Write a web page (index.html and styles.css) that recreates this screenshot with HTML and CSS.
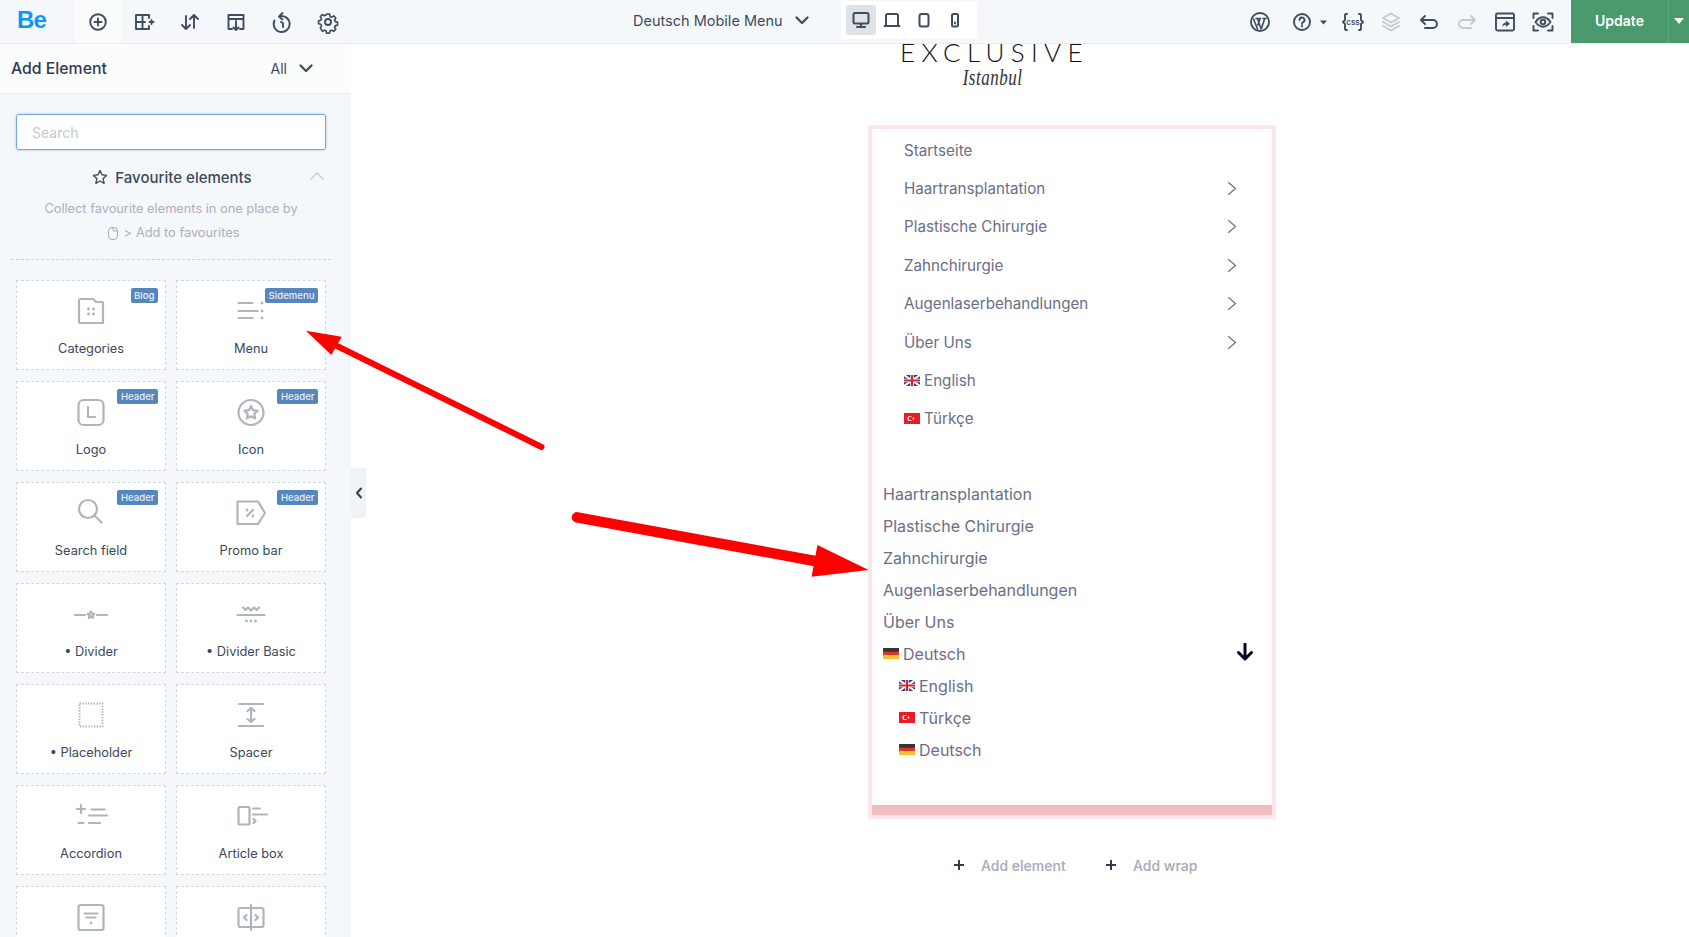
FILE: index.html
```html
<!DOCTYPE html>
<html lang="en">
<head>
  <meta charset="UTF-8" />
  <title>Deutsch Mobile Menu</title>
  <link rel="stylesheet" href="styles.css">
</head>
<body>
  <div class="topbar">
    <div class="brand">Be</div>
    <div class="tab active">
      <svg width="24" height="24" viewBox="0 0 24 24"><circle cx="12" cy="12" r="7.800"/><path d="M12 8.500v7M8.500 12h7"/></svg>
    </div>
    <div class="tab">
      <svg width="24" height="24" viewBox="0 0 24 24"><path d="M17 8V5H4v14h13v-3M10.500 5v14M4 12h9M19.500 10v4M17.500 12h4"/></svg>
    </div>
    <div class="tab">
      <svg width="24" height="24" viewBox="0 0 24 24"><path d="M8 6v13M4 15l4 4 4-4M16 18V5M12 9l4-4 4 4"/></svg>
    </div>
    <div class="tab">
      <svg width="24" height="24" viewBox="0 0 24 24"><path d="M8 19H4.500V5h15v14H16M4.500 9h15M12 11v9M9.500 17.500l2.500 2.500 2.500-2.500"/></svg>
    </div>
    <div class="tab">
      <svg width="24" height="24" viewBox="0 0 24 24"><path d="M9 6.500a8 8 0 1 1-4.500 4M12.500 3L9 6.500l3.500 3M11 12l2 1v4"/></svg>
    </div>
    <div class="tab">
      <svg width="24" height="24" viewBox="0 0 24 24"><circle cx="12" cy="12" r="3"/><path d="M10.300 3h3.400l.6 2.600 1.800.8 2.300-1.400 2.400 2.400-1.400 2.300.8 1.800 2.600.6v3.400l-2.600.6-.8 1.800 1.400 2.300-2.400 2.400-2.300-1.400-1.800.8-.6 2.600h-3.400l-.6-2.600-1.800-.8-2.300 1.400L3.200 18.600l1.400-2.300-.8-1.800L1.200 13.900v-3.400l2.600-.6.800-1.800L3.200 5.800 5.600 3.400l2.300 1.400 1.800-.8z" transform="translate(1.500 1.500) scale(.88)"/></svg>
    </div>
    <div class="page-title">
      <span>Deutsch Mobile Menu</span>
      <svg width="14" height="9" viewBox="0 0 14 9"><path d="M1.500 1.500L7 7l5.500-5.500"/></svg>
    </div>
    <div class="devices">
      <div class="device on">
        <svg width="20" height="20" viewBox="0 0 20 20"><rect x="2.500" y="3" width="15" height="10.500" rx="1.500"/><path d="M10 14v3M6 17h8" /></svg>
      </div>
      <div class="device">
        <svg width="20" height="20" viewBox="0 0 20 20"><path d="M4 15V5.500A1.500 1.500 0 0 1 5.500 4h9A1.500 1.500 0 0 1 16 5.500V15M2.500 16h15"/></svg>
      </div>
      <div class="device">
        <svg width="20" height="20" viewBox="0 0 20 20"><rect x="5.500" y="4" width="9" height="12.500" rx="2"/></svg>
      </div>
      <div class="device">
        <svg width="20" height="20" viewBox="0 0 20 20"><rect x="7" y="4" width="6" height="12.500" rx="1.500"/><path d="M10 12.500v1"/></svg>
      </div>
    </div>
    <div class="tools">
      <div class="tool">
        <svg width="22" height="22" viewBox="0 0 22 22"><circle cx="11" cy="11" r="9"/><path class="thick" d="M4.500 8l4 10M7 7.500h4.500M8.500 8l3.700 10L15.600 8M11 8l-2.200 6M14 7.500h3M15.600 8l-2 6" /></svg>
      </div>
      <div class="tool help">
        <svg width="55" height="24" viewBox="0 0 55 24"><circle cx="23" cy="12" r="8"/><path d="M20.500 10a2.500 2.500 0 1 1 3.500 2.300c-.7.400-1 .8-1 1.700M23 16v.5"/><path class="solid" d="M41 10.500h7l-3.500 4z"/></svg>
      </div>
      <div class="tool">
        <svg width="24" height="24" viewBox="0 0 24 24"><path d="M6 4H5a1 1 0 0 0-1 1v5l-2 2 2 2v5a1 1 0 0 0 1 1h1M18 4h1a1 1 0 0 1 1 1v5l2 2-2 2v5a1 1 0 0 1-1 1h-1"/></svg>
        <span class="css-tag">css</span>
      </div>
      <div class="tool faded">
        <svg width="24" height="24" viewBox="0 0 24 24"><path d="M12 3.500l8 4.500-8 4.500L4 8zM4 12l8 4.500 8-4.500M4 16l8 4.500 8-4.500"/></svg>
      </div>
      <div class="tool">
        <svg width="24" height="24" viewBox="0 0 24 24"><path d="M8 6L4 10l4 4M4.500 10H16a3.800 3.800 0 0 1 0 8H8"/></svg>
      </div>
      <div class="tool faded">
        <svg width="24" height="24" viewBox="0 0 24 24"><path d="M16 6l4 4-4 4M19.500 10H8a3.800 3.800 0 0 0 0 8h8"/></svg>
      </div>
      <div class="tool">
        <svg width="24" height="24" viewBox="0 0 24 24"><rect x="3" y="3.500" width="18" height="17" rx="1.500"/><path d="M3 8h18"/><path class="solid" d="M13 10.500l4 3.300-4 3.200v-2c-2 0-3 .6-4 2 .3-2.600 1.700-4.100 4-4.400z"/></svg>
      </div>
      <div class="tool">
        <svg width="24" height="24" viewBox="0 0 24 24"><path d="M7 3.500H2.500V8M17 3.500h4.500V8M7 20.500H2.500V16M17 20.500h4.500V16M4.500 12C7 8.500 9.300 7.300 12 7.300s5 1.200 7.500 4.700c-2.500 3.500-4.800 4.700-7.500 4.700S7 15.500 4.500 12z"/><circle cx="12" cy="12" r="2.300"/></svg>
      </div>
    </div>
    <div class="update">
      <span class="update-label">Update</span>
      <span class="update-more"></span>
    </div>
  </div>

  <div class="main">
    <div class="sidebar">
      <div class="side-head">
        <span class="side-title">Add Element</span>
        <span class="side-filter">All
          <svg width="14" height="9" viewBox="0 0 14 9"><path d="M1.500 1.500L7 7l5.500-5.500"/></svg>
        </span>
      </div>
      <div class="side-body">
        <input class="search" type="text" placeholder="Search">
        <div class="fav-head">
          <svg width="16" height="16" viewBox="0 0 16 16"><path d="M8 1.500l2 4.300 4.600.6-3.400 3.200.9 4.700L8 12l-4.100 2.300.9-4.700L1.400 6.400 6 5.800z"/></svg>
          <span>Favourite elements</span>
          <svg class="fav-up" width="14" height="8" viewBox="0 0 14 8"><path d="M1 7l6-6 6 6"/></svg>
        </div>
        <p class="fav-note">Collect favourite elements in one place by</p>
        <p class="fav-note second">
          <svg width="12" height="15" viewBox="0 0 12 15"><rect x="1.500" y="1.500" width="9" height="12" rx="3.500"/><path d="M6 1.500v3.500h4.500"/></svg>
          <span class="gt">&gt;</span> Add to favourites
        </p>
        <div class="dash"></div>
        <div class="elements">
          <div class="card">
            <span class="badge">Blog</span>
            <svg width="30" height="30" viewBox="0 0 30 30"><path d="M3 4.500A1.500 1.500 0 0 1 4.500 3H17l3 3h6a1 1 0 0 1 1 1v20H4a1 1 0 0 1-1-1z"/><path class="dots" d="M12.500 13v.1M17.500 13v.1M12.500 18v.1M17.500 18v.1"/></svg>
            <div class="card-name">Categories</div>
          </div>
          <div class="card">
            <span class="badge">Sidemenu</span>
            <svg width="30" height="30" viewBox="0 0 30 30"><path d="M2.500 7h14M2.500 15h19M2.500 22h14"/><path class="dots" d="M26 7v.1M26 15v.1M26 22v.1"/></svg>
            <div class="card-name">Menu</div>
          </div>
          <div class="card">
            <span class="badge">Header</span>
            <svg width="30" height="30" viewBox="0 0 30 30"><rect x="2.500" y="3" width="25" height="25" rx="5"/><path d="M12 10v10h7"/></svg>
            <div class="card-name">Logo</div>
          </div>
          <div class="card">
            <span class="badge">Header</span>
            <svg width="30" height="30" viewBox="0 0 30 30"><circle cx="15" cy="15.500" r="12.500"/><path d="M15 9l2 4.200 4.600.6-3.300 3.100.8 4.500-4.100-2.200-4.100 2.200.8-4.500-3.300-3.100 4.600-.6z"/></svg>
            <div class="card-name">Icon</div>
          </div>
          <div class="card">
            <span class="badge">Header</span>
            <svg width="30" height="30" viewBox="0 0 30 30"><circle cx="12" cy="11" r="9"/><path d="M19 18l6.500 6.500"/></svg>
            <div class="card-name">Search field</div>
          </div>
          <div class="card">
            <span class="badge">Header</span>
            <svg width="30" height="30" viewBox="0 0 30 30"><path d="M1.500 3.500h20.500l7 11.500-7 11H1.500z"/><path d="M11 18l6-6"/><path class="dots" d="M11 12v.1M17 18v.1"/></svg>
            <div class="card-name">Promo bar</div>
          </div>
          <div class="card">
            <svg width="30" height="30" viewBox="0 0 30 30"><path d="M-1 16h10M21 16h10"/><path d="M15 12.500l1 2.100 2.300.3-1.700 1.600.5 2.300-2.100-1.100-2.100 1.100.5-2.300-1.700-1.600 2.300-.3z"/></svg>
            <div class="card-name">• Divider</div>
          </div>
          <div class="card">
            <svg width="30" height="30" viewBox="0 0 30 30"><path d="M1.500 16h27M7 8.500l2.500 2.500 2.500-2.500 3 3 3-3 2.500 2.500L23 8.500"/><path class="dots" d="M10.500 22v.1M15 22v.1M19.500 22v.1"/></svg>
            <div class="card-name">• Divider Basic</div>
          </div>
          <div class="card">
            <svg width="30" height="30" viewBox="0 0 30 30"><rect class="dotted" x="3.500" y="3.500" width="23" height="23"/></svg>
            <div class="card-name">• Placeholder</div>
          </div>
          <div class="card">
            <svg width="30" height="30" viewBox="0 0 30 30"><path d="M3 4h24M3 26h24M15 8v14M11.500 11L15 8l3.500 3M11.500 19l3.500 3 3.500-3"/></svg>
            <div class="card-name">Spacer</div>
          </div>
          <div class="card">
            <svg width="30" height="30" viewBox="0 0 30 30"><path d="M1 8h8M5 4v8M2.500 22h5M13 14.500h18M15.500 8.500h13M13 22h11"/></svg>
            <div class="card-name">Accordion</div>
          </div>
          <div class="card">
            <svg width="30" height="30" viewBox="0 0 30 30"><rect x="2.500" y="6" width="11" height="17.500" rx="1.500"/><path d="M17 7.500h7M17 13.500h14M17.500 18l2 2-2 2"/></svg>
            <div class="card-name">Article box</div>
          </div>
          <div class="card">
            <svg width="30" height="30" viewBox="0 0 30 30"><rect x="2.500" y="3" width="25" height="25" rx="2"/><path d="M8.500 11.500h13M10.500 15.500h9"/><path class="dots" d="M15 21v.1"/></svg>
          </div>
          <div class="card">
            <svg width="30" height="30" viewBox="0 0 30 30"><rect x="2.500" y="6" width="25" height="19" rx="2"/><path d="M15 3v25M10.500 13l-2.500 2.500 2.500 2.500M19.500 13l2.500 2.500-2.500 2.500"/></svg>
          </div>
        </div>
      </div>
    </div>

    <div class="canvas">
      <div class="handle">
        <svg width="8" height="12" viewBox="0 0 8 12"><path d="M6 1.500L2 6l4 4.500"/></svg>
      </div>
      <div class="page">
        <div class="logo">
          <div class="logo-main">EXCLUSIVE</div>
          <div class="logo-sub">Istanbul</div>
        </div>
        <div class="menu-box">
          <ul class="menu-one">
            <li>Startseite</li>
            <li>Haartransplantation <svg class="chev" width="10" height="15" viewBox="0 0 10 15"><path d="M1.500 1.500l7 6-7 6"/></svg></li>
            <li>Plastische Chirurgie <svg class="chev" width="10" height="15" viewBox="0 0 10 15"><path d="M1.500 1.500l7 6-7 6"/></svg></li>
            <li>Zahnchirurgie <svg class="chev" width="10" height="15" viewBox="0 0 10 15"><path d="M1.500 1.500l7 6-7 6"/></svg></li>
            <li>Augenlaserbehandlungen <svg class="chev" width="10" height="15" viewBox="0 0 10 15"><path d="M1.500 1.500l7 6-7 6"/></svg></li>
            <li>Über Uns <svg class="chev" width="10" height="15" viewBox="0 0 10 15"><path d="M1.500 1.500l7 6-7 6"/></svg></li>
            <li><span class="lang"><svg class="flag" width="16" height="11" viewBox="0 0 16 11"><rect width="16" height="11" fill="#2b3f8f"/><path d="M0 0l16 11M16 0L0 11" stroke="#fff" stroke-width="2"/><path d="M8 0v11M0 5.500h16" stroke="#fff" stroke-width="3.500"/><path d="M8 0v11M0 5.500h16" stroke="#d8232a" stroke-width="2"/></svg>English</span></li>
            <li><span class="lang"><svg class="flag" width="16" height="11" viewBox="0 0 16 11"><rect width="16" height="11" fill="#e81c24"/><circle cx="6" cy="5.500" r="2.600" fill="#fff"/><circle cx="6.800" cy="5.500" r="2" fill="#e81c24"/><path d="M9 4.300v2.400l1.800-1.200z" fill="#fff"/></svg>Türkçe</span></li>
          </ul>
          <ul class="menu-two">
            <li>Haartransplantation</li>
            <li>Plastische Chirurgie</li>
            <li>Zahnchirurgie</li>
            <li>Augenlaserbehandlungen</li>
            <li>Über Uns</li>
            <li class="has-sub">
              <span class="lang"><svg class="flag" width="16" height="11" viewBox="0 0 16 11"><rect width="16" height="4" fill="#333"/><rect y="3.700" width="16" height="3.700" fill="#d8382a"/><rect y="7.300" width="16" height="3.700" fill="#f2c230"/></svg>Deutsch</span>
              <svg class="down" width="18" height="18" viewBox="0 0 18 18"><path d="M9 1v15M2.500 9.500L9 16l6.500-6.500"/></svg>
            </li>
            <li class="sub"><span class="lang"><svg class="flag" width="16" height="11" viewBox="0 0 16 11"><rect width="16" height="11" fill="#2b3f8f"/><path d="M0 0l16 11M16 0L0 11" stroke="#fff" stroke-width="2"/><path d="M8 0v11M0 5.500h16" stroke="#fff" stroke-width="3.500"/><path d="M8 0v11M0 5.500h16" stroke="#d8232a" stroke-width="2"/></svg>English</span></li>
            <li class="sub"><span class="lang"><svg class="flag" width="16" height="11" viewBox="0 0 16 11"><rect width="16" height="11" fill="#e81c24"/><circle cx="6" cy="5.500" r="2.600" fill="#fff"/><circle cx="6.800" cy="5.500" r="2" fill="#e81c24"/><path d="M9 4.300v2.400l1.800-1.200z" fill="#fff"/></svg>Türkçe</span></li>
            <li class="sub"><span class="lang"><svg class="flag" width="16" height="11" viewBox="0 0 16 11"><rect width="16" height="4" fill="#333"/><rect y="3.700" width="16" height="3.700" fill="#d8382a"/><rect y="7.300" width="16" height="3.700" fill="#f2c230"/></svg>Deutsch</span></li>
          </ul>
          <div class="wrap-bar"></div>
        </div>
        <div class="add-row">
          <div class="add-btn"><svg width="10" height="10" viewBox="0 0 10 10"><path d="M5 0v10M0 5h10"/></svg>Add element</div>
          <div class="add-btn"><svg width="10" height="10" viewBox="0 0 10 10"><path d="M5 0v10M0 5h10"/></svg>Add wrap</div>
        </div>
      </div>
    </div>
  </div>

  <svg class="arrows" width="1689" height="937" viewBox="0 0 1689 937">
    <path d="M337 346L541.500 447" stroke-width="6"/>
    <path class="head" d="M306 330.700L341.700 336.700L331.300 355z"/>
    <path d="M577 517.300L815 561" stroke-width="10.500"/>
    <path class="head" d="M868.600 570L817.400 545L811.600 576.700z"/>
  </svg>
</body>
</html>
```

FILE: styles.css
```css
* { box-sizing: border-box; }
html, body { height: 100%; }
body {
  margin: 0;
  background: #fff;
  font-family: Inter, 'Noto Sans', sans-serif;
  color: #333f4f;
  overflow: hidden;
  position: relative;
}
svg { display: block; fill: none; stroke: #3f4d5e; stroke-width: 1.900; stroke-linecap: round; stroke-linejoin: round; }
svg .solid { fill: #3f4d5e; stroke: none; }

/* top bar */
.topbar {
  display: flex;
  align-items: stretch;
  height: 44px;
  background: #f5f8fa;
  border-bottom: 1px solid #e9edf1;
  position: relative;
  z-index: 2;
}
.brand {
  width: 75px;
  padding: 5px 0 0 17px;
  font: 800 24px/30px 'Liberation Sans', sans-serif;
  letter-spacing: -0.800px;
  color: #0b97f8;
}
.tab {
  width: 46px;
  height: 43px;
  display: flex;
  align-items: center;
  justify-content: center;
}
.tab.active { background: #fbfcfc; }
.page-title {
  width: 208px;
  margin-left: 282px;
  padding-bottom: 3px;
  display: flex;
  align-items: center;
  gap: 11px;
  font-size: 14.500px;
  color: #3d4b5c;
}
.page-title span { width: 151px; white-space: nowrap; }
.page-title svg { stroke-width: 2.300; }
.devices {
  width: 136px;
  height: 38px;
  margin-top: 1px;
  padding: 4px 5px;
  background: #fff;
  border-radius: 3px;
  display: flex;
}
.device {
  width: 30px;
  height: 30px;
  margin-right: 2px;
  border-radius: 3px;
  display: flex;
  align-items: center;
  justify-content: center;
}
.device svg { stroke-width: 2; }
.device.on { background: #dfe3e8; }
.tools {
  margin-left: auto;
  display: flex;
  align-items: center;
  padding-right: 9px;
  height: 43px;
}
.tool {
  width: 38px;
  height: 24px;
  display: flex;
  align-items: center;
  justify-content: center;
  position: relative;
}
.tool.help { width: 55px; }
.tool.faded svg { stroke: #c3c9cf; }
.tool svg .thick { stroke-width: 1.600; }
.css-tag {
  position: absolute;
  left: 0;
  right: 0;
  top: 5px;
  text-align: center;
  font: 600 8px/14px Inter, sans-serif;
  color: #3f4d5e;
}
.update {
  width: 118px;
  height: 43px;
  background: #4a9a6d;
  display: flex;
  color: #fff;
}
.update-label {
  width: 98px;
  border-right: 1px solid #5ba67c;
  text-align: center;
  font-size: 14px;
  font-weight: 600;
  line-height: 41px;
}
.update-more {
  margin: 18px 0 0 5px;
  width: 0;
  height: 0;
  border: 5px solid transparent;
  border-top: 6px solid #fff;
  border-bottom: 0;
}

.main { display: flex; height: calc(100% - 44px); }

/* left panel */
.sidebar {
  width: 351px;
  flex: none;
  background: #f5f8fa;
  overflow: hidden;
}
.side-head {
  height: 50px;
  background: #fbfcfc;
  border-bottom: 1px solid #e9edf1;
  display: flex;
  align-items: center;
  justify-content: space-between;
  padding: 0 38px 1px 11px;
}
.side-title { font-size: 15.800px; font-weight: 500; color: #2f3d4f; }
.side-filter { display: flex; align-items: center; gap: 12px; font-size: 14px; color: #3a4859; }
.side-filter svg { stroke-width: 2.300; }
.side-body { padding: 20px 25px 0 16px; }
.search {
  display: block;
  width: 310px;
  height: 36px;
  padding: 0 15px;
  border: 1px solid #74a8dd;
  border-radius: 3px;
  box-shadow: 0 0 3px rgba(116,168,221,.6);
  font: 14px Inter, sans-serif;
  outline: none;
}
.search::placeholder { color: #c5cad0; }
.fav-head {
  position: relative;
  display: flex;
  align-items: center;
  justify-content: center;
  gap: 7px;
  height: 20px;
  margin-top: 17px;
  padding-left: 2px;
  font-size: 15px;
  font-weight: 500;
  color: #3a4859;
}
.fav-head > svg { stroke-width: 1.400; }
.fav-up {
  position: absolute;
  right: 2px;
  top: 5px;
  stroke: #c3c9cf !important;
}
.fav-note {
  margin: 13px 0 0 0;
  font-size: 12.800px;
  line-height: 18px;
  color: #a9b0bd;
  text-align: center;
  white-space: nowrap;
}
.fav-note.second {
  margin-top: 6px;
  padding-left: 5px;
  display: flex;
  justify-content: center;
  align-items: center;
}
.fav-note.second svg { stroke: #a9b0bd; stroke-width: 1; margin-right: 4px; }
.gt { margin-right: 4px; }
.dash {
  margin: 17px -5px 0 -5px;
  border-top: 1px dashed #ccd1d6;
}
.elements {
  display: grid;
  grid-template-columns: 150px 150px;
  grid-auto-rows: 90px;
  gap: 11px 10px;
  margin-top: 20px;
}
.card {
  position: relative;
  background: #fff;
  border: 1px dashed #d3d7db;
  padding-top: 15px;
}
.card svg {
  margin: 0 auto;
  stroke: #aeb5bc;
  stroke-width: 2.200;
  overflow: visible;
}
.card svg .dots { stroke-width: 2.800; }
.card svg .dotted { stroke-width: 1.800; stroke-dasharray: 1.400 1.400; stroke-linecap: butt; }
.card-name {
  margin-top: 13px;
  text-align: center;
  font-size: 12.800px;
  line-height: 20px;
  color: #3a4859;
}
.badge {
  position: absolute;
  top: 7px;
  right: 7px;
  height: 15px;
  padding: 0 3.500px;
  background: #5587bd;
  border-radius: 2px;
  color: #e9f0f7;
  font-size: 9.600px;
  font-weight: 500;
  line-height: 15px;
}

/* canvas */
.canvas { flex: 1; position: relative; }
.handle {
  position: absolute;
  left: 0;
  top: 424px;
  width: 15px;
  height: 50px;
  background: #eff3f6;
  border-radius: 0 3px 3px 0;
  display: flex;
  align-items: center;
  justify-content: center;
}
.handle svg { stroke-width: 2; stroke: #2f3d4f; }
.page { width: 408px; margin-left: 517px; }
.logo { height: 82px; padding-left: 32px; color: #111; }
.logo-main {
  width: 190px;
  margin-top: -1px;
  font: 300 26px/19px Lato, sans-serif;
  letter-spacing: 6.300px;
  white-space: nowrap;
}
.logo-sub {
  width: 185px;
  margin-top: 6px;
  text-align: center;
  font: italic 17px/22px 'Liberation Serif', serif;
  letter-spacing: 0.500px;
  color: #333;
  transform: scaleY(1.300);
}
.menu-box { border: 4px solid #fce5e8; height: 694px; }
.menu-box ul { list-style: none; margin: 0; padding: 0; color: #6b6e86; }
.menu-one { padding: 2px 35px 0 32px !important; }
.menu-one li {
  height: 38.400px;
  display: flex;
  align-items: center;
  justify-content: space-between;
  font-size: 15.200px;
}
.chev { stroke: #6b6e86; stroke-width: 1.100; }
.lang { display: flex; align-items: center; gap: 4px; }
.flag { stroke: none; flex: none; }
.menu-two { margin-top: 39.400px !important; padding-left: 11px !important; padding-right: 18px !important; }
.menu-two li {
  height: 32px;
  display: flex;
  align-items: center;
  justify-content: space-between;
  font-size: 16px;
}
.menu-two .sub { padding-left: 16px; }
.down { stroke: #05051e; stroke-width: 3; margin-top: -4px; }
.wrap-bar { height: 10px; margin-top: 39px; background: #f1bcc2; }
.add-row { display: flex; margin-top: 36px; padding-left: 86px; }
.add-btn {
  width: 152px;
  height: 20px;
  display: flex;
  align-items: center;
  gap: 17px;
  font-size: 14px;
  font-weight: 500;
  color: #a5aab5;
  white-space: nowrap;
}
.add-btn svg { stroke: #2f3d4f; stroke-width: 2; stroke-linecap: butt; }

/* annotation arrows drawn over the screenshot */
.arrows { position: absolute; left: 0; top: 0; z-index: 3; pointer-events: none; stroke: #fe0000; }
.arrows .head { fill: #fe0000; stroke: none; }
```
